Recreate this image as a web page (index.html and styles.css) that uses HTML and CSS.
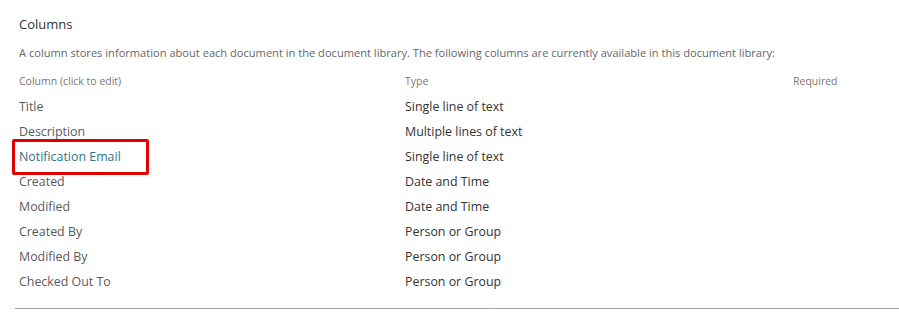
FILE: index.html
```html
<!DOCTYPE html>
<html>
	<head>
		<meta charset="UTF-8">
		<title>Columns</title>
		<link rel="stylesheet" href="styles.css">
	</head>
	<body>
		<div class="section">
			<h3 class="title">Columns</h3>
			<p class="intro">A column stores information about each document in the document library. The following columns are currently available in this document library:</p>
			<div class="cols">
				<div class="head">Column (click to edit)</div>
				<div class="head">Type</div>
				<div class="head">Required</div>

				<div class="cell">Title</div>
				<div class="cell">Single line of text</div>
				<div class="cell"></div>

				<div class="cell">Description</div>
				<div class="cell">Multiple lines of text</div>
				<div class="cell"></div>

				<div class="cell mark"><a href="#">Notification Email</a><span class="box"></span></div>
				<div class="cell">Single line of text</div>
				<div class="cell"></div>

				<div class="cell">Created</div>
				<div class="cell">Date and Time</div>
				<div class="cell"></div>

				<div class="cell">Modified</div>
				<div class="cell">Date and Time</div>
				<div class="cell"></div>

				<div class="cell">Created By</div>
				<div class="cell">Person or Group</div>
				<div class="cell"></div>

				<div class="cell">Modified By</div>
				<div class="cell">Person or Group</div>
				<div class="cell"></div>

				<div class="cell">Checked Out To</div>
				<div class="cell">Person or Group</div>
				<div class="cell"></div>
			</div>
		</div>
		<div class="rule"></div>
	</body>
</html>
```

FILE: styles.css
```css
*{
	margin: 0;
	padding: 0;
	box-sizing: border-box;
}
body{
	background: #fff;
	font-family: "Open Sans", "Noto Sans", sans-serif;
	color: #444;
}
.section{
	padding: 14px 0 0 19px;
}
.title{
	font-size: 13px;
	font-weight: normal;
	color: #333;
	line-height: 20px;
}
.intro{
	font-size: 11.1px;
	color: #666;
	line-height: 16px;
	margin-top: 11px;
}
.cols{
	display: grid;
	grid-template-columns: 386px 388px auto;
	margin-top: 13px;
}
.head{
	font-size: 10.5px;
	color: #777;
	line-height: 14px;
	height: 20px;
}
.cell{
	font-size: 12.4px;
	line-height: 25px;
	height: 25px;
	color: #5a5a5a;
}
.cell:nth-child(3n+2){
	color: #333;
}
.mark{
	position: relative;
}
.mark a{
	color: #2e7384;
	text-decoration: none;
}
/* red highlight drawn over the row */
.box{
	position: absolute;
	left: -7px;
	top: -5px;
	width: 137px;
	height: 36px;
	border: 3px solid #e00000;
	border-radius: 2px;
}
.rule{
	margin: 14px 0 0 15px;
	border-top: 1px solid #a6a6a6;
}
```
